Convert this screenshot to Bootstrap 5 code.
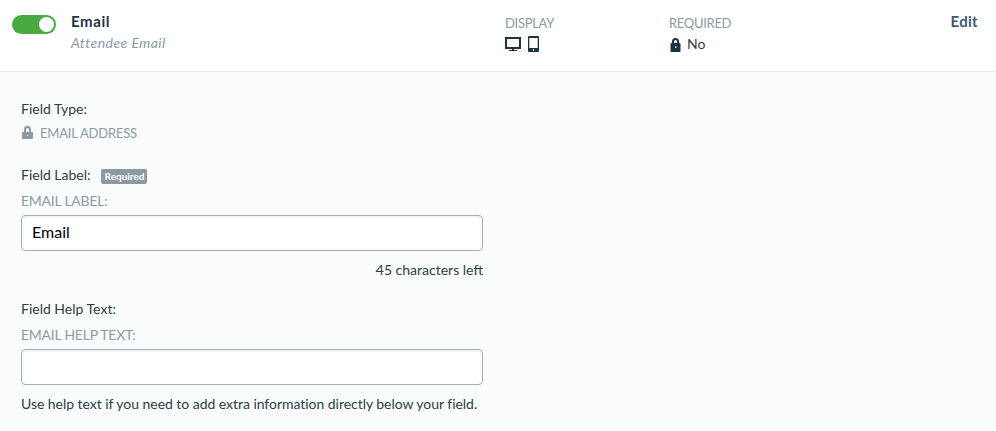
<!DOCTYPE html>
<html lang="en">
<head>
<meta charset="utf-8">
<meta name="viewport" content="width=device-width, initial-scale=1">
<title>Email field</title>
<link href="https://cdn.jsdelivr.net/npm/bootstrap@5.3.0/dist/css/bootstrap.min.css" rel="stylesheet">
<script src="https://cdn.jsdelivr.net/npm/bootstrap@5.3.0/dist/js/bootstrap.bundle.min.js" defer></script>
<style>
body{font-family:Lato,"Liberation Sans",sans-serif;font-size:14px;line-height:20px;color:#2b3e48;background:#fafcfb;min-height:431px}
.field-head{height:72px;border-bottom:1px solid #e9eeed;padding:12px 18px 0 12px}
.toggle.form-check-input{width:44px;height:19px;margin:3px 15px 0 0;float:none;border:0;background-color:#47a93f;background-size:0;box-shadow:none;cursor:pointer}
.toggle-wrap{display:grid;padding:0;margin:0;min-height:0}
.toggle-wrap>*{grid-area:1/1}
.knob{width:15px;height:15px;border-radius:50%;background:#fff;justify-self:end;margin:5px 17px 0 0;z-index:1;pointer-events:none}
.name-col{width:434px}
.display-col{width:164px}
.title{font-size:15px;font-weight:700;color:#1e3441;letter-spacing:.6px;margin-top:-1px}
.sub{font-style:italic;color:#8b9aa3;margin-top:2px;letter-spacing:.46px}
.cap{font-size:13px;color:#8b9aa3;letter-spacing:-.3px}
.cap-top{padding-top:1px;margin-bottom:-1px}
.cap-addr{letter-spacing:-.2px;margin-top:3px}
.cap-addr span{padding-top:1px;margin-bottom:-1px}
.tag-label{color:#8b9aa3;letter-spacing:-.24px;margin:6px 0 4px}
.edit{font-size:15px;font-weight:700;color:#3d5a6c;letter-spacing:.3px;margin-top:-1px}
.dark{color:#1e3441}
.answer{padding-top:2px}
.panel-body{padding:27px 0 0 21px;width:483px}
.label-row{margin-top:23px}
.req{font-size:10px;font-weight:700;line-height:15px;height:15px;padding:0 4px;border-radius:2px;background:#8b99a3;width:46px;margin:3px 0 0 10px}
.field.form-control{height:36px;border:1px solid #a5b1b9;border-radius:4px;padding:0 10px 4px;font-size:16px;color:#000;background:#fff;box-shadow:inset 0 1px 3px rgba(0,0,0,.08)}
.counter{margin-top:9px}
.help-row{margin-top:19px}
.hint{margin-top:9px;letter-spacing:-.04px}
</style>
</head>
<body>
<header class="field-head bg-white d-flex align-items-start text-nowrap">
  <div class="form-switch toggle-wrap">
    <input class="form-check-input toggle" type="checkbox" checked aria-label="Show field">
    <span class="knob"></span>
  </div>
  <div class="name-col">
    <div class="title">Email</div>
    <div class="sub">Attendee Email</div>
  </div>
  <div class="display-col">
    <div class="cap cap-top">DISPLAY</div>
    <div class="d-flex dark">
      <svg width="36" height="20" viewBox="0 0 36 20" fill="currentColor"><path fill-rule="evenodd" d="M0 5h16v12H0zM2 7v8h12V7zM7 17h2v1h3v1H4v-1h3z"/><path fill-rule="evenodd" d="M24 4h9q1 0 1 1v14q0 1-1 1h-9q-1 0-1-1V5q0-1 1-1zm.3 2v10h8.400V6zM28 17v2h1v-2z"/></svg>
    </div>
  </div>
  <div>
    <div class="cap cap-top">REQUIRED</div>
    <div class="d-flex">
      <svg class="dark" width="18" height="20" viewBox="-.5 0 18 20" fill="currentColor"><path fill-rule="evenodd" d="M2.500 11V9.500a3.500 3.500 0 0 1 7 0V11h.5q1 0 1 1v7q0 1-1 1H2q-1 0-1-1v-7q0-1 1-1zm2 0h3V9.500a1.500 1.500 0 0 0-3 0zm1 3.500v1.500h1.500v-1.500z"/></svg>
      <span class="answer">No</span>
    </div>
  </div>
  <a class="edit text-decoration-none ms-auto" href="#">Edit</a>
</header>
<main class="panel-body text-nowrap">
  <div>Field Type:</div>
  <div class="cap cap-addr d-flex">
    <svg width="19" height="20" viewBox="0 0 19 20" fill="currentColor"><path fill-rule="evenodd" d="M3 10V7.500a3.500 3.500 0 0 1 7 0V10h1q1 0 1 1v5q0 1-1 1H2q-1 0-1-1v-5q0-1 1-1zm2 0h3V7.500a1.500 1.500 0 0 0-3 0zm1 3v1h1v-1z"/></svg>
    <span>EMAIL ADDRESS</span>
  </div>
  <div class="d-flex align-items-center label-row"><label for="label">Field Label:</label><span class="badge req">Required</span></div>
  <div class="tag-label">EMAIL LABEL:</div>
  <input id="label" class="form-control field" value="Email">
  <div class="counter text-end">45 characters left</div>
  <div class="help-row"><label for="help">Field Help Text:</label></div>
  <div class="tag-label">EMAIL HELP TEXT:</div>
  <input id="help" class="form-control field">
  <div class="hint">Use help text if you need to add extra information directly below your field.</div>
</main>
</body>
</html>
